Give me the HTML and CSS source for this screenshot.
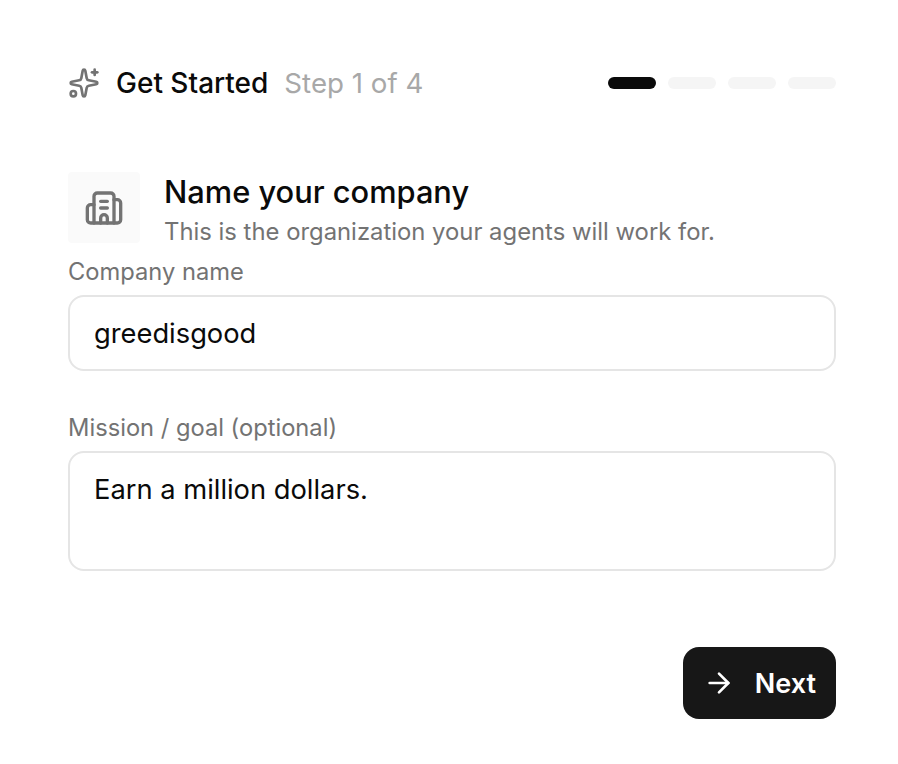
FILE: index.html
```html
<!DOCTYPE html>
<html lang="en">
<head>
    <meta charset="UTF-8">
    <meta name="viewport" content="width=device-width, initial-scale=1.0">
    <title>Get Started</title>
    <link rel="stylesheet" href="styles.css">
</head>
<body>
    <div class="dialog">
        <div class="top-bar">
            <svg class="sparkle" viewBox="0 0 24 24" fill="none" stroke="currentColor" stroke-width="2" stroke-linecap="round" stroke-linejoin="round">
                <path d="M11.017 2.814a1 1 0 0 1 1.966 0l1.051 5.558a2 2 0 0 0 1.594 1.594l5.558 1.051a1 1 0 0 1 0 1.966l-5.558 1.051a2 2 0 0 0-1.594 1.594l-1.051 5.558a1 1 0 0 1-1.966 0l-1.051-5.558a2 2 0 0 0-1.594-1.594l-5.558-1.051a1 1 0 0 1 0-1.966l5.558-1.051a2 2 0 0 0 1.594-1.594z"/>
                <path d="M20 2v4"/>
                <path d="M22 4h-4"/>
                <circle cx="4" cy="20" r="2"/>
            </svg>
            <span class="top-title">Get Started</span>
            <span class="top-step">Step 1 of 4</span>
            <div class="steps">
                <div class="step-pill active"></div>
                <div class="step-pill"></div>
                <div class="step-pill"></div>
                <div class="step-pill"></div>
            </div>
        </div>

        <div class="heading">
            <div class="heading-icon">
                <svg viewBox="0 0 24 24" fill="none" stroke="currentColor" stroke-width="2" stroke-linecap="round" stroke-linejoin="round">
                    <path d="M10 12h4"/>
                    <path d="M10 8h4"/>
                    <path d="M14 21v-3a2 2 0 0 0-4 0v3"/>
                    <path d="M6 10H4a2 2 0 0 0-2 2v7a2 2 0 0 0 2 2h16a2 2 0 0 0 2-2V9a2 2 0 0 0-2-2h-2"/>
                    <path d="M6 21V5a2 2 0 0 1 2-2h8a2 2 0 0 1 2 2v16"/>
                </svg>
            </div>
            <div>
                <h2>Name your company</h2>
                <p>This is the organization your agents will work for.</p>
            </div>
        </div>

        <div class="field">
            <label for="companyName">Company name</label>
            <input type="text" id="companyName" value="greedisgood">
        </div>

        <div class="field">
            <label for="mission">Mission / goal (optional)</label>
            <textarea id="mission" rows="3">Earn a million dollars.</textarea>
        </div>

        <div class="footer">
            <button class="next-btn">
                <svg viewBox="0 0 24 24" fill="none" stroke="currentColor" stroke-width="2" stroke-linecap="round" stroke-linejoin="round">
                    <path d="M5 12h14"/>
                    <path d="m12 5 7 7-7 7"/>
                </svg>
                Next
            </button>
        </div>
    </div>
</body>
</html>
```

FILE: styles.css
```css
* {
    box-sizing: border-box;
}

body {
    margin: 0;
    background: #ffffff;
    font-family: Inter, "Liberation Sans", sans-serif;
    color: #0a0a0a;
}

.dialog {
    padding: 67px 62px 0 68px;
}

.top-bar {
    display: flex;
    align-items: center;
    height: 32px;
}

.sparkle {
    width: 32px;
    height: 32px;
    color: #737373;
    margin-right: 16px;
}

.top-title {
    font-size: 28px;
    font-weight: 500;
}

.top-step {
    font-size: 27.7px;
    color: #a8a8a8;
    margin-left: 16px;
}

.steps {
    display: flex;
    gap: 12px;
    margin-left: auto;
}

.step-pill {
    width: 48px;
    height: 12px;
    border-radius: 6px;
    background: #f5f5f5;
}

.step-pill.active {
    background: #0a0a0a;
}

.heading {
    display: flex;
    gap: 24px;
    margin-top: 73px;
    margin-bottom: 5px;
}

.heading-icon {
    width: 72px;
    height: 71px;
    background: #fafafa;
    border-radius: 4px;
    display: flex;
    align-items: center;
    justify-content: center;
    color: #737373;
}

.heading-icon svg {
    width: 40px;
    height: 40px;
}

.heading h2 {
    margin: 0;
    font-size: 30.8px;
    font-weight: 500;
    line-height: 40px;
}

.heading p {
    margin: 0;
    font-size: 23.85px;
    line-height: 40px;
    color: #737373;
}

.field {
    margin-bottom: 42px;
}

label {
    display: block;
    font-size: 23.7px;
    line-height: 30px;
    color: #737373;
    margin-bottom: 8px;
}

input,
textarea {
    display: block;
    width: 100%;
    border: 2px solid #e5e5e5;
    border-radius: 16px;
    padding: 16px 24px;
    font-family: inherit;
    font-size: 27.3px;
    color: #0a0a0a;
    background: #ffffff;
    outline: none;
    resize: none;
}

input {
    height: 76px;
}

textarea {
    height: 120px;
    padding-top: 20px;
}

.footer {
    display: flex;
    justify-content: flex-end;
    margin-top: 76px;
}

.next-btn {
    display: flex;
    align-items: center;
    gap: 20px;
    height: 72px;
    padding: 0 20px;
    border: none;
    border-radius: 16px;
    background: #171717;
    color: #ffffff;
    font-family: inherit;
    font-size: 27px;
    font-weight: 600;
}

.next-btn svg {
    width: 32px;
    height: 32px;
}
```
